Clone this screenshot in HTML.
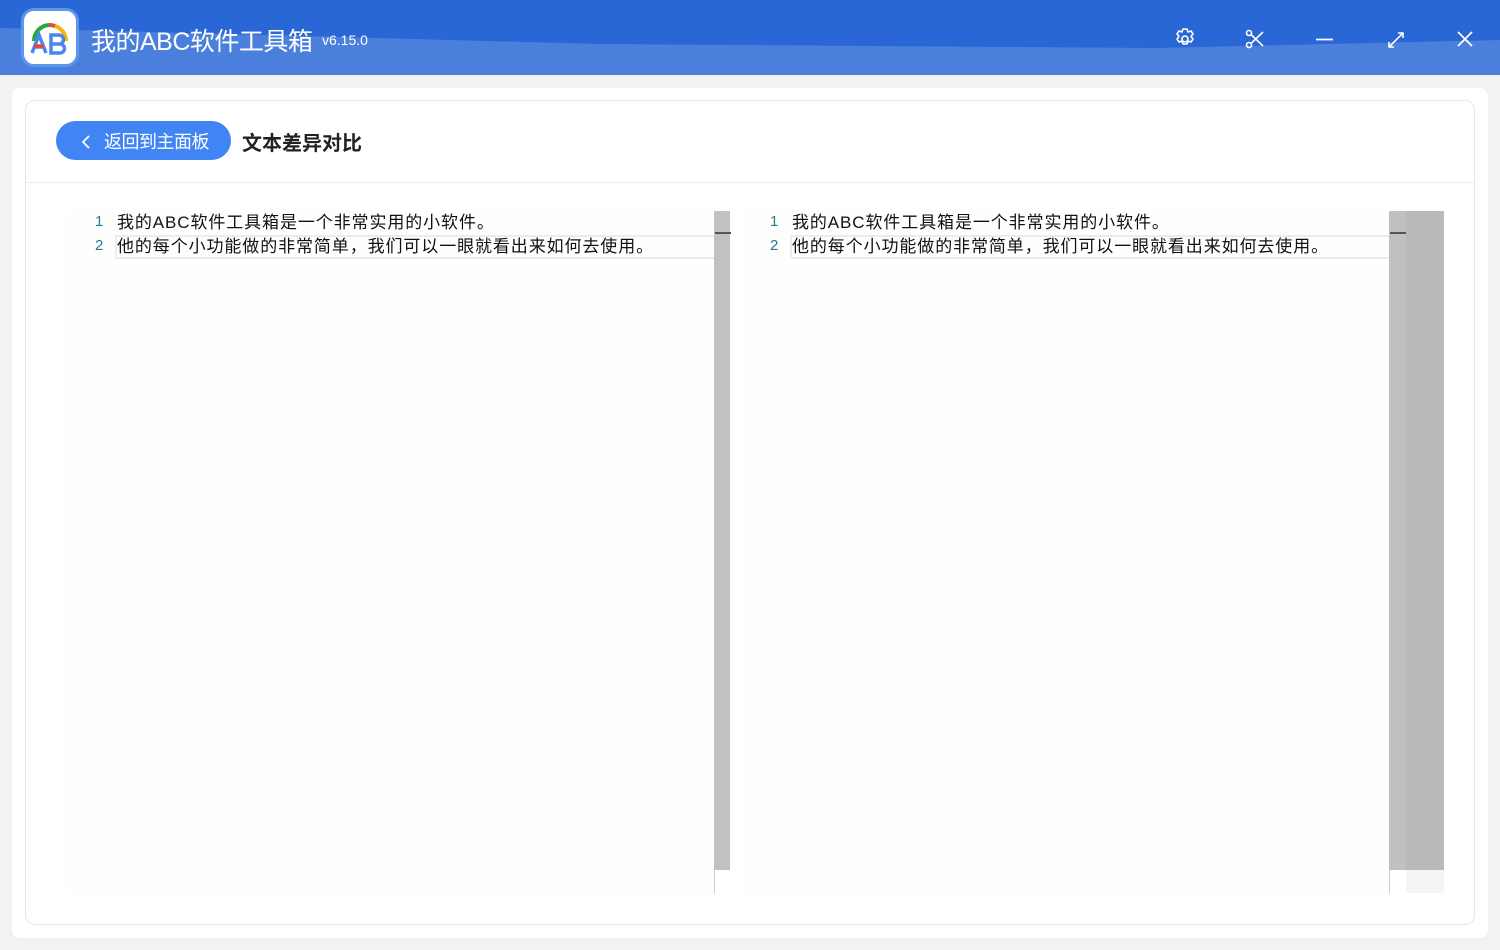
<!DOCTYPE html>
<html><head><meta charset="utf-8"><style>
*{margin:0;padding:0;box-sizing:border-box}
body{width:1500px;height:950px;overflow:hidden;background:#f2f2f2;font-family:"Liberation Sans","Noto Sans CJK SC",sans-serif;position:relative}
.top{position:absolute;left:0;top:0;width:1500px;height:75px;background:#4a7fdb;overflow:hidden}
.top .dark{position:absolute;left:0;top:0;width:1500px;height:75px;background:#2966d6;clip-path:polygon(0 0,100% 0,100% 40px,77% 48px,40% 44px,0 28px)}
.logo{position:absolute;left:21px;top:8px;width:58px;height:59px;border-radius:13px;background:#fff;border:3px solid #5b95ec}
.title{position:absolute;left:91px;top:22px;color:#fff;font-size:25px;letter-spacing:-0.5px}
.ver{position:absolute;left:322px;top:32px;color:#fff;font-size:14px}
.ic{position:absolute;top:28px}
.panel{position:absolute;left:12px;top:88px;width:1476px;height:850px;background:#fff;border-radius:8px}
.card{position:absolute;left:25px;top:100px;width:1450px;height:825px;border:1px solid #e6e6e6;border-radius:10px;background:#fff}
.hline{position:absolute;left:26px;top:182px;width:1448px;height:1px;background:#ececec}
.btn{position:absolute;left:56px;top:121px;width:175px;height:39px;background:#4185f4;border-radius:20px;color:#fff;font-size:18px;line-height:42px;padding-left:48px;letter-spacing:-0.5px}
.btn svg{position:absolute;left:25px;top:14px}
.h{position:absolute;left:242px;top:127px;font-size:20px;font-weight:bold;color:#222}
.ed{position:absolute;top:211px;height:682px;background:#fefefc}
.ln{position:absolute;font-size:15px;color:#237893;font-family:"Liberation Sans",sans-serif}
.tx{position:absolute;font-size:17px;color:#111;white-space:nowrap;letter-spacing:0.9px}
.cur{position:absolute;height:24px;border:2px solid #ececec;border-right:none}
.sb{position:absolute;top:211px;height:659px;background:#c1c1c1}
.mark{position:absolute;height:2px;background:#555}
</style></head><body>
<div class="top"><div class="dark"></div></div>
<div class="logo"><svg width="52" height="53" viewBox="0 0 52 53">
<path d="M10 30 A16 16 0 0 1 25 14" stroke="#2aa640" stroke-width="4" fill="none"/>
<path d="M25 14 A16 16 0 0 1 31 15" stroke="#e8453c" stroke-width="4" fill="none"/>
<path d="M31 15 A16 16 0 0 1 42 30" stroke="#f4b400" stroke-width="4" fill="none"/>
<path d="M8 42 L15 24 L22 42 M10 36 H20" stroke="#4a86f0" stroke-width="3.5" fill="none"/>
<path d="M10 35 H20" stroke="#e8453c" stroke-width="3.5"/>
<path d="M27 24 H35 A4.5 4.5 0 0 1 35 33 H27 Z M27 33 H36 A4.5 4.5 0 0 1 36 42 H27 Z" stroke="#4a86f0" stroke-width="3.5" fill="none"/>
</svg></div>
<div class="title">我的ABC软件工具箱</div>
<div class="ver">v6.15.0</div>
<svg class="ic" style="left:1175px" width="20" height="22" viewBox="0 0 20 22"><path d="M8 1h4l1 3 3-1 2 3-2 2.5 2 2.5-2 3-3-1-1 3H8l-1-3-3 1-2-3 2-2.5L2 6l2-3 3 1z" fill="none" stroke="#fff" stroke-width="1.6" stroke-linejoin="round"/><circle cx="10" cy="11" r="3" fill="none" stroke="#fff" stroke-width="1.6"/></svg>
<svg class="ic" style="left:1245px" width="20" height="22" viewBox="0 0 20 22"><circle cx="4" cy="5" r="2.5" fill="none" stroke="#fff" stroke-width="1.6"/><circle cx="4" cy="17" r="2.5" fill="none" stroke="#fff" stroke-width="1.6"/><path d="M6 6.5 18 18M6 15.5 18 4" stroke="#fff" stroke-width="1.6"/></svg>
<svg class="ic" style="left:1315px" width="20" height="22"><path d="M1 11.5h17" stroke="#fff" stroke-width="1.8"/></svg>
<svg class="ic" style="left:1386px" width="20" height="22" viewBox="0 0 20 22"><path d="M3 19 17 5M12 5h5v5M3 14v5h5" stroke="#fff" stroke-width="1.6" fill="none"/></svg>
<svg class="ic" style="left:1456px" width="20" height="22"><path d="M2 4l14 14M16 4 2 18" stroke="#fff" stroke-width="1.8"/></svg>
<div class="panel"></div>
<div class="card"></div>
<div class="hline"></div>
<div class="btn"><svg width="10" height="14"><path d="M8 1 2 7l6 6" stroke="#fff" stroke-width="1.8" fill="none"/></svg>返回到主面板</div>
<div class="h">文本差异对比</div>

<div class="ed" style="left:66px;width:648px"></div>
<div class="cur" style="left:115px;top:235px;width:599px"></div>
<div class="ln" style="left:95px;top:213px">1</div>
<div class="ln" style="left:95px;top:237px">2</div>
<div class="tx" style="left:117px;top:208px">我的ABC软件工具箱是一个非常实用的小软件。</div>
<div class="tx" style="left:117px;top:232px">他的每个小功能做的非常简单，我们可以一眼就看出来如何去使用。</div>
<div class="sb" style="left:714px;width:16px"></div>
<div style="position:absolute;left:714px;top:870px;width:1px;height:23px;background:#ccc"></div>
<div class="mark" style="left:715px;top:232px;width:16px"></div>

<div class="ed" style="left:742px;width:647px"></div>
<div class="cur" style="left:790px;top:235px;width:599px"></div>
<div class="ln" style="left:770px;top:213px">1</div>
<div class="ln" style="left:770px;top:237px">2</div>
<div class="tx" style="left:792px;top:208px">我的ABC软件工具箱是一个非常实用的小软件。</div>
<div class="tx" style="left:792px;top:232px">他的每个小功能做的非常简单，我们可以一眼就看出来如何去使用。</div>
<div class="sb" style="left:1389px;width:17px;background:#c0c0c0"></div>
<div class="sb" style="left:1406px;width:38px;background:#bababa"></div>
<div style="position:absolute;left:1406px;top:870px;width:38px;height:23px;background:#f5f5f5"></div>
<div style="position:absolute;left:1389px;top:870px;width:1px;height:23px;background:#ccc"></div>
<div class="mark" style="left:1390px;top:232px;width:16px"></div>
</body></html>
